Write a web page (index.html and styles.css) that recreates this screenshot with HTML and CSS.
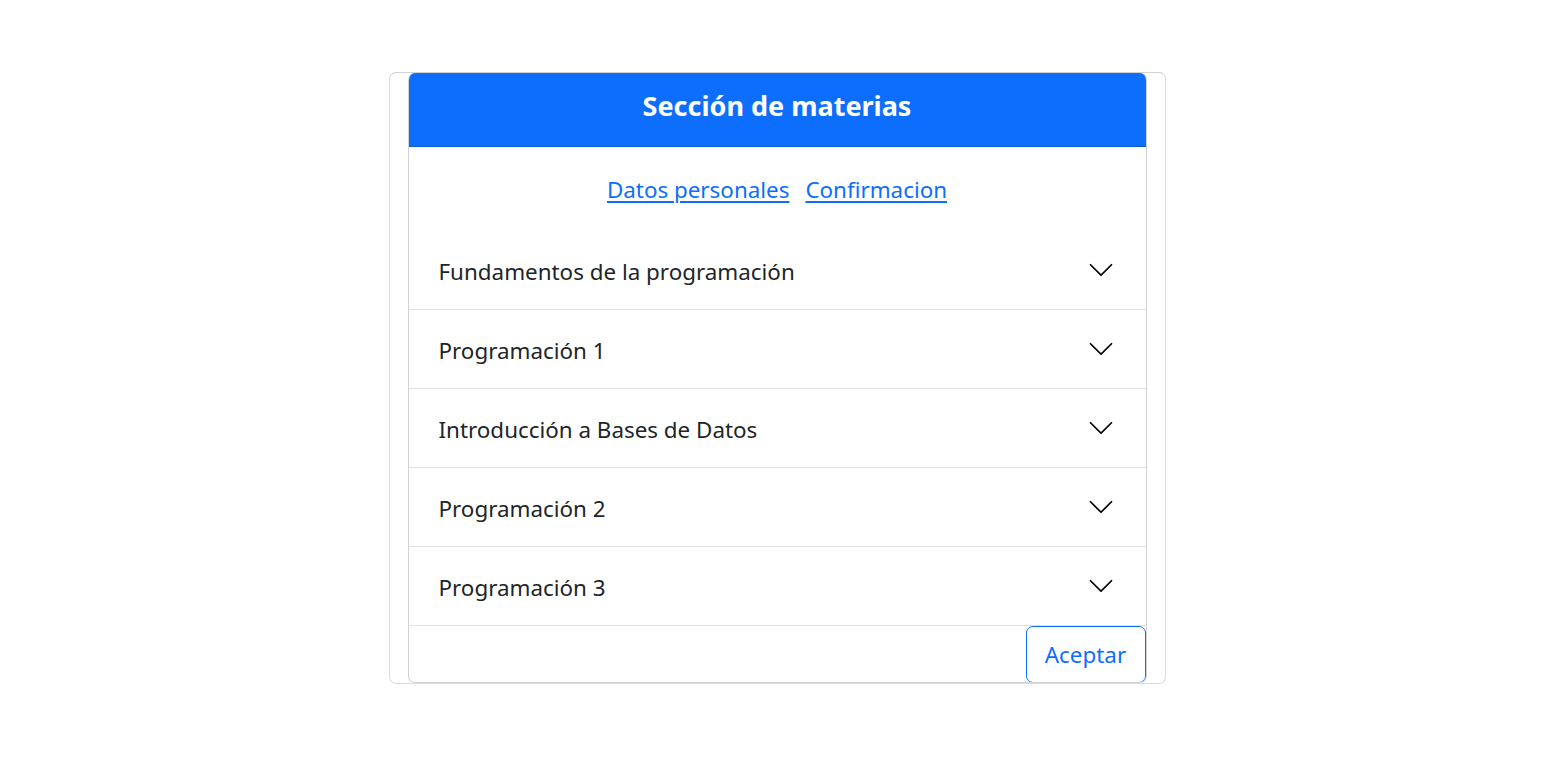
FILE: index.html
```html
<!DOCTYPE html>
<html lang="es">
<head>
<meta charset="utf-8">
<title>Sección de materias</title>
<link rel="stylesheet" href="styles.css">
</head>
<body>
<div class="page">
  <div class="outer">
    <div class="card">
      <div class="card-header"><h3 class="title">Sección de materias</h3></div>
      <div class="links">
        <a href="#">Datos personales</a>
        <a href="#">Confirmacion</a>
      </div>
      <div class="accordion">
        <div class="item"><button class="acc-btn"><span>Fundamentos de la programación</span><svg class="chev" viewBox="0 0 16 16"><path d="M1.646 4.646a.5.5 0 0 1 .708 0L8 10.293l5.646-5.647a.5.5 0 0 1 .708.708l-6 6a.5.5 0 0 1-.708 0l-6-6a.5.5 0 0 1 0-.708z"/></svg></button></div>
        <div class="item"><button class="acc-btn"><span>Programación 1</span><svg class="chev" viewBox="0 0 16 16"><path d="M1.646 4.646a.5.5 0 0 1 .708 0L8 10.293l5.646-5.647a.5.5 0 0 1 .708.708l-6 6a.5.5 0 0 1-.708 0l-6-6a.5.5 0 0 1 0-.708z"/></svg></button></div>
        <div class="item"><button class="acc-btn"><span>Introducción a Bases de Datos</span><svg class="chev" viewBox="0 0 16 16"><path d="M1.646 4.646a.5.5 0 0 1 .708 0L8 10.293l5.646-5.647a.5.5 0 0 1 .708.708l-6 6a.5.5 0 0 1-.708 0l-6-6a.5.5 0 0 1 0-.708z"/></svg></button></div>
        <div class="item"><button class="acc-btn"><span>Programación 2</span><svg class="chev" viewBox="0 0 16 16"><path d="M1.646 4.646a.5.5 0 0 1 .708 0L8 10.293l5.646-5.647a.5.5 0 0 1 .708.708l-6 6a.5.5 0 0 1-.708 0l-6-6a.5.5 0 0 1 0-.708z"/></svg></button></div>
        <div class="item"><button class="acc-btn"><span>Programación 3</span><svg class="chev" viewBox="0 0 16 16"><path d="M1.646 4.646a.5.5 0 0 1 .708 0L8 10.293l5.646-5.647a.5.5 0 0 1 .708.708l-6 6a.5.5 0 0 1-.708 0l-6-6a.5.5 0 0 1 0-.708z"/></svg></button></div>
      </div>
      <div class="footer">
        <button class="btn-outline">Aceptar</button>
      </div>
    </div>
  </div>
</div>
</body>
</html>
```

FILE: styles.css
```css
* { box-sizing: border-box; }
html, body { margin: 0; padding: 0; background: #fff; }
body {
  font-family: "Noto Sans", "Open Sans", sans-serif;
  color: #212529;
  font-size: 22.4px;
}
.page {
  display: flex;
  justify-content: center;
  padding-top: 72px;
}
.outer {
  width: 777px;
  border: 1px solid #d8dadd;
  border-radius: 7px;
  border-top-color: #d0d2d4;
  padding: 0 18px;
}
.card {
  border: 1px solid #d0d3d6;
  border-top: none;
  border-radius: 7px;
  overflow: hidden;
  background: #fff;
}
.card-header {
  background: #0d6efd;
  height: 74px;
  display: flex;
  align-items: center;
  justify-content: center;
  border-bottom: 1px solid #0b5ed7;
  padding-bottom: 6px;
}
.title {
  margin: 0;
  color: #fff;
  font-size: 27px;
  font-weight: 700;
  line-height: 1.2;
}
.links {
  height: 84px;
  display: flex;
  justify-content: center;
  align-items: center;
  gap: 16px;
  padding-top: 1px;
}
.links a {
  color: #0d6efd;
  text-decoration: underline;
  text-underline-offset: 3px;
  font-size: 22.4px;
}
.accordion { display: flex; flex-direction: column; }
.item { border-bottom: 1px solid #dee2e6; }
.acc-btn {
  width: 100%;
  height: 78px;
  display: flex;
  align-items: center;
  justify-content: space-between;
  padding: 2px 31px 0 30px;
  border: none;
  background: #fff;
  font: inherit;
  color: #212529;
  text-align: left;
}
.chev {
  width: 28px;
  height: 28px;
  fill: #000;
  margin-top: -2px;
}
.footer {
  display: flex;
  justify-content: flex-end;
  height: 56px;
}
.btn-outline {
  width: 120px;
  height: 57px;
  border: 1px solid #0d6efd;
  border-radius: 7px;
  background: #fff;
  color: #0d6efd;
  font: inherit;
  font-size: 22.4px;
  padding: 0 18px;
}
```
